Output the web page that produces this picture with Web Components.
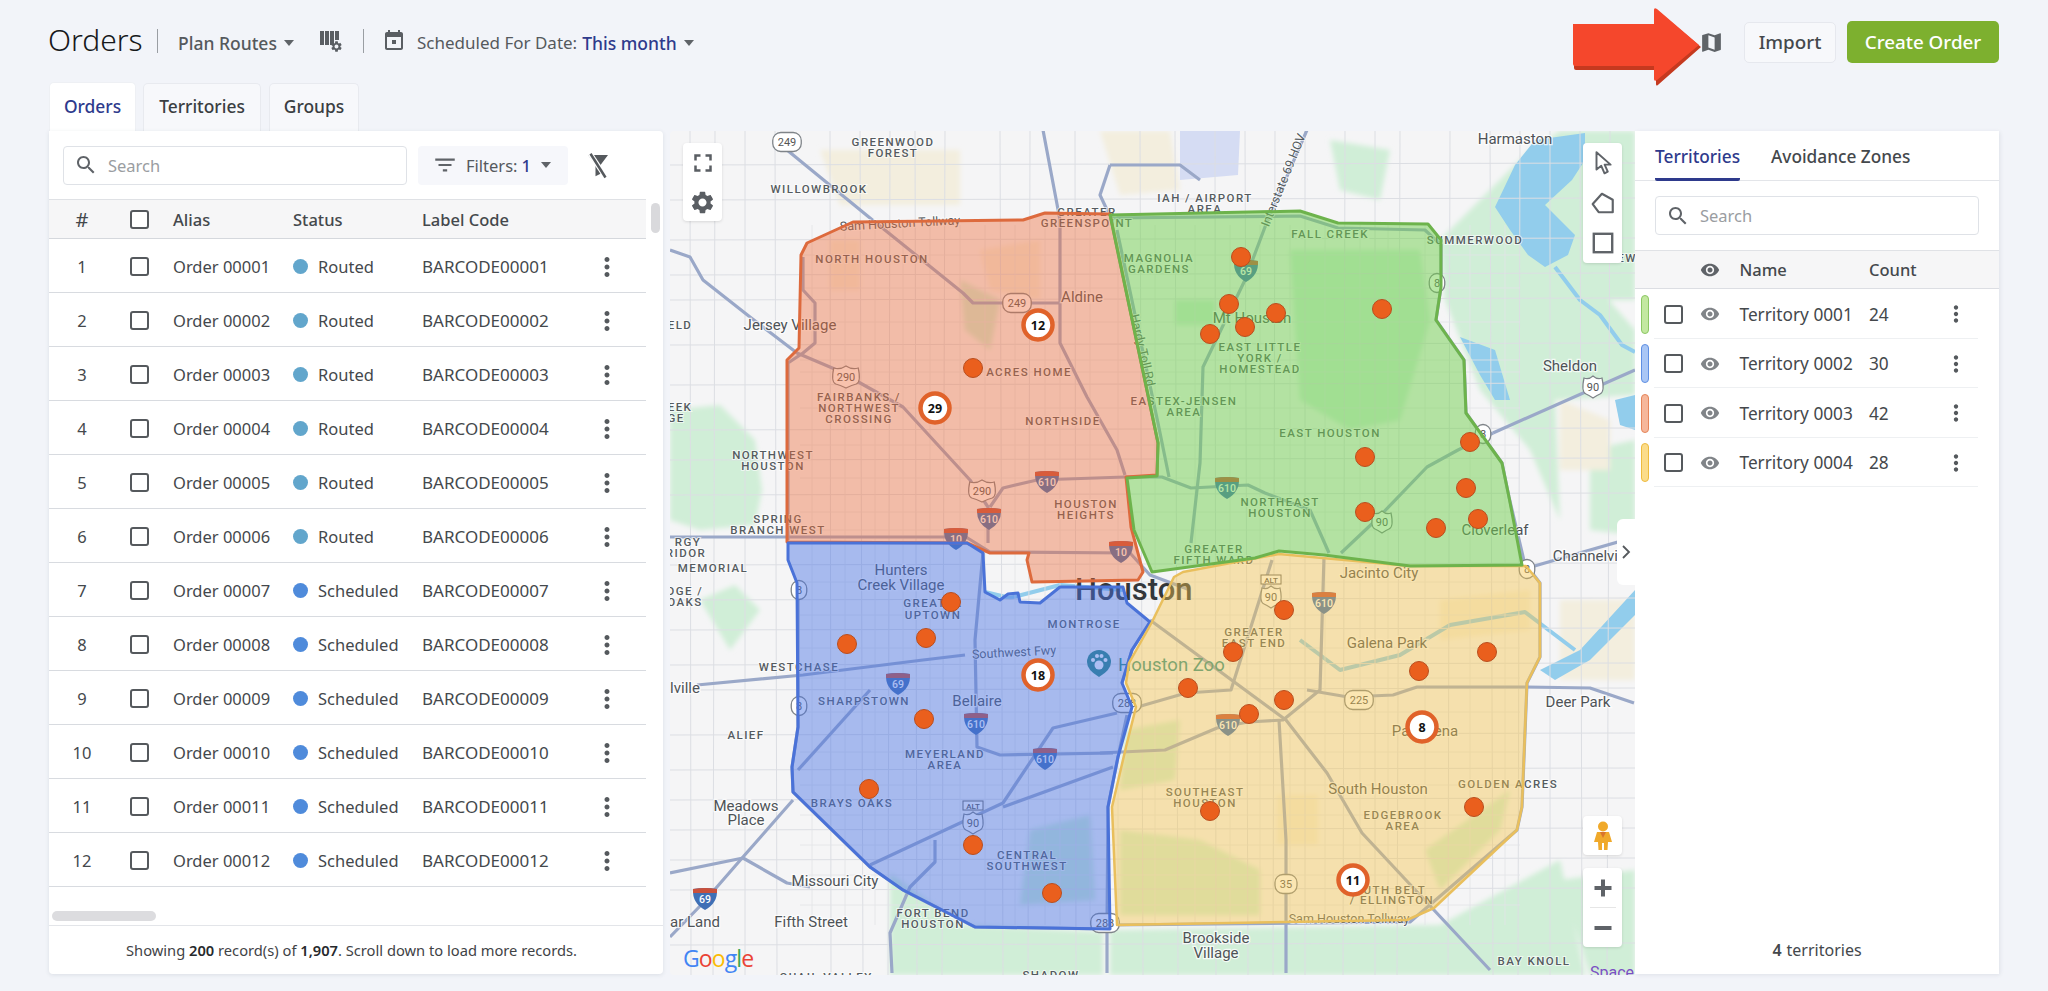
<!DOCTYPE html>
<html lang="en">
<head>
<meta charset="utf-8">
<title>Orders</title>
<style>
  html, body { margin: 0; height: 991px; overflow: hidden; }
  body { background: #f2f4f9; font-family: "Noto Sans", "Open Sans", sans-serif; color: #3f4346; }
</style>
</head>
<body>
<orders-page>
  <top-bar slot="top"></top-bar>
  <tab-strip slot="tabs"></tab-strip>
  <orders-panel slot="left">
    <order-row num="1" alias="Order 00001" status="Routed" code="BARCODE00001"></order-row>
    <order-row num="2" alias="Order 00002" status="Routed" code="BARCODE00002"></order-row>
    <order-row num="3" alias="Order 00003" status="Routed" code="BARCODE00003"></order-row>
    <order-row num="4" alias="Order 00004" status="Routed" code="BARCODE00004"></order-row>
    <order-row num="5" alias="Order 00005" status="Routed" code="BARCODE00005"></order-row>
    <order-row num="6" alias="Order 00006" status="Routed" code="BARCODE00006"></order-row>
    <order-row num="7" alias="Order 00007" status="Scheduled" code="BARCODE00007"></order-row>
    <order-row num="8" alias="Order 00008" status="Scheduled" code="BARCODE00008"></order-row>
    <order-row num="9" alias="Order 00009" status="Scheduled" code="BARCODE00009"></order-row>
    <order-row num="10" alias="Order 00010" status="Scheduled" code="BARCODE00010"></order-row>
    <order-row num="11" alias="Order 00011" status="Scheduled" code="BARCODE00011"></order-row>
    <order-row num="12" alias="Order 00012" status="Scheduled" code="BARCODE00012"></order-row>
  </orders-panel>
  <territory-map slot="map"></territory-map>
  <territory-panel slot="right">
    <territory-row name="Territory 0001" count="24" fill="#c3e8a0" edge="#8cc763"></territory-row>
    <territory-row name="Territory 0002" count="30" fill="#a9c6f5" edge="#5f8fe3"></territory-row>
    <territory-row name="Territory 0003" count="42" fill="#f6b79b" edge="#e5855a"></territory-row>
    <territory-row name="Territory 0004" count="28" fill="#fbdc8a" edge="#eebb3f"></territory-row>
  </territory-panel>
</orders-page>

<script>
// Shared icon paths
const ICONS = {
    search: 'M15.5 14h-.79l-.28-.27C15.41 12.59 16 11.11 16 9.5 16 5.91 13.09 3 9.5 3S3 5.91 3 9.5 5.91 16 9.5 16c1.61 0 3.09-.59 4.23-1.57l.27.28v.79l5 4.99L20.49 19l-4.99-5zm-6 0C7.01 14 5 11.99 5 9.5S7.01 5 9.5 5 14 7.01 14 9.5 11.99 14 9.5 14z',
    filter: 'M10 18h4v-2h-4v2zM3 6v2h18V6H3zm3 7h12v-2H6v2z',
    more: 'M12 8c1.1 0 2-.9 2-2s-.9-2-2-2-2 .9-2 2 .9 2 2 2zm0 2c-1.1 0-2 .9-2 2s.9 2 2 2 2-.9 2-2-.9-2-2-2zm0 6c-1.1 0-2 .9-2 2s.9 2 2 2 2-.9 2-2-.9-2-2-2z',
    eye: 'M12 4.5C7 4.5 2.73 7.61 1 12c1.73 4.39 6 7.5 11 7.5s9.27-3.11 11-7.5c-1.73-4.39-6-7.5-11-7.5zM12 17c-2.76 0-5-2.24-5-5s2.24-5 5-5 5 2.24 5 5-2.24 5-5 5zm0-8c-1.66 0-3 1.34-3 3s1.34 3 3 3 3-1.34 3-3-1.34-3-3-3z',
    gear: 'M19.14 12.94c.04-.3.06-.61.06-.94 0-.32-.02-.64-.07-.94l2.03-1.58c.18-.14.23-.41.12-.61l-1.92-3.32c-.12-.22-.37-.29-.59-.22l-2.39.96c-.5-.38-1.03-.7-1.62-.94l-.36-2.54c-.04-.24-.24-.41-.48-.41h-3.84c-.24 0-.43.17-.47.41l-.36 2.54c-.59.24-1.13.57-1.62.94l-2.39-.96c-.22-.08-.47 0-.59.22L2.74 8.87c-.12.21-.08.47.12.61l2.03 1.58c-.05.3-.09.63-.09.94s.02.64.07.94l-2.03 1.58c-.18.14-.23.41-.12.61l1.92 3.32c.12.22.37.29.59.22l2.39-.96c.5.38 1.03.7 1.62.94l.36 2.54c.05.24.24.41.48.41h3.84c.24 0 .44-.17.47-.41l.36-2.54c.59-.24 1.13-.56 1.62-.94l2.39.96c.22.08.47 0 .59-.22l1.92-3.32c.12-.22.07-.47-.12-.61l-2.01-1.58zM12 15.6c-1.98 0-3.6-1.62-3.6-3.6s1.62-3.6 3.6-3.6 3.6 1.62 3.6 3.6-1.62 3.6-3.6 3.6z',
    calendar: 'M19 3h-1V1h-2v2H8V1H6v2H5c-1.11 0-1.99.9-1.99 2L3 19c0 1.1.89 2 2 2h14c1.1 0 2-.9 2-2V5c0-1.1-.9-2-2-2zm0 16H5V8h14v11zM10 11h4v4h-4z',
    map: 'M20.5 3l-.16.03L15 5.1 9 3 3.36 4.9c-.21.07-.36.25-.36.48V20.5c0 .28.22.5.5.5l.16-.03L9 18.9l6 2.1 5.64-1.9c.21-.07.36-.25.36-.48V3.5c0-.28-.22-.5-.5-.5zM15 19l-6-2.11V5l6 2.11V19z',
    fullscreen: 'M7 14H5v5h5v-2H7v-3zm-2-4h2V7h3V5H5v5zm12 7h-3v2h5v-5h-2v3zM14 5v2h3v3h2V5h-5z'
};
const icon = (name, size, color) => `<svg width="${size}" height="${size}" viewBox="0 0 24 24" fill="${color}" style="display:block;flex:none"><path d="${ICONS[name]}"/></svg>`;
const CARET = '<span style="display:inline-block;width:0;height:0;border-left:5.5px solid transparent;border-right:5.5px solid transparent;border-top:6px solid #5f6368;flex:none"></span>';
const CHECK = '<span style="display:block;box-sizing:border-box;width:19px;height:19px;border:2px solid #55595d;border-radius:3px;background:#fff;flex:none"></span>';

class OrdersPage extends HTMLElement {
    constructor() {
        super();
        this.attachShadow({ mode: 'open' });
        this.shadowRoot.innerHTML = `
            <style>
                :host { display: block; padding: 0 49px 0 48px; }
                .tabs { height: 49px; padding-left: 1px; }
                .main { display: flex; height: 844px; padding-left: 1px; }
                .left { width: 614px; margin-right: 7px; flex: none; }
                .map { width: 965px; flex: none; }
                .right { width: 364px; flex: none; }
            </style>
            <slot name="top"></slot>
            <div class="tabs"><slot name="tabs"></slot></div>
            <div class="main">
                <div class="left"><slot name="left"></slot></div>
                <div class="map"><slot name="map"></slot></div>
                <div class="right"><slot name="right"></slot></div>
            </div>
        `;
    }
}

class TopBar extends HTMLElement {
    constructor() {
        super();
        this.attachShadow({ mode: 'open' });
        this.shadowRoot.innerHTML = `
            <style>
                :host { display: flex; align-items: center; height: 82px; padding-top: 3px; box-sizing: border-box; font-size: 17px; position: relative; color: #55595d; }
                h1 { margin: -6px 0 0; font-size: 30px; font-weight: 300; color: #16181b; width: 92px; white-space: nowrap; }
                .sep { width: 1px; height: 24px; background: #9a9ea3; flex: none; margin-top: -3px; }
                .plan { display: flex; align-items: center; gap: 7px; margin-left: 20px; width: 118px; font-size: 17.5px; font-weight: 500; white-space: nowrap; }
                .cols { position: relative; width: 22px; height: 20px; margin-left: 24px; margin-right: 21px; flex: none; margin-top: -4px; }
                .cols i { position: absolute; top: 0; width: 4px; height: 14px; background: #5a5e63; }
                .cols svg { position: absolute; right: -1px; bottom: -2px; }
                .date { display: flex; align-items: center; margin-left: 18px; white-space: nowrap; }
                .date b { font-size: 17.5px; font-weight: 500; color: #2e3a8c; margin-left: 5px; margin-right: 7px; }
                .date svg { margin-right: 11px; margin-top: -4px; }
                .end { margin-left: auto; display: flex; align-items: center; margin-top: -1px; }
                button { font: 500 18.8px "Noto Sans", sans-serif; height: 41px; border-radius: 5px; box-sizing: border-box; padding: 0; }
                .import { width: 92px; margin-left: 20px; background: #f7f8fb; border: 1px solid #e6e8ee; color: #44484c; }
                .create { width: 152px; height: 42px; margin-left: 11px; background: #7db02f; border: 0; color: #fff; }
                .arrow { position: absolute; left: 1525px; top: 8px; }
            </style>
            <h1>Orders</h1>
            <span class="sep" style="margin-left:17px"></span>
            <div class="plan"><span>Plan Routes</span>${CARET}</div>
            <div class="cols"><i style="left:0"></i><i style="left:5px"></i><i style="left:10px"></i><i style="left:15px;height:9px"></i>
                <svg width="13" height="13" viewBox="0 0 24 24" fill="#5a5e63"><path d="${ICONS.gear}"/></svg></div>
            <span class="sep"></span>
            <div class="date">${icon('calendar', 24, '#5a5e63')}<span>Scheduled For Date:</span><b>This month</b>${CARET}</div>
            <div class="end">${icon('map', 25, '#5f6368')}
                <button class="import">Import</button><button class="create">Create Order</button></div>
            <svg class="arrow" width="130" height="78" viewBox="0 0 130 78">
                <path d="M0 18 H81 V2 Q81 0 84 1 L127 37 L85 74 Q82 77 82 74 V60 H2 Q0 60 0 58 Z" fill="#c5391f" transform="translate(1 2)"/>
                <path d="M0 16 H81 V2 Q81 -1 84 1 L126 37 L84 72 Q81 74 81 71 V58 H2 Q0 58 0 56 Z" fill="#f5472c"/>
            </svg>
        `;
    }
}

class TabStrip extends HTMLElement {
    constructor() {
        super();
        this.attachShadow({ mode: 'open' });
        this.shadowRoot.innerHTML = `
            <style>
                :host { display: flex; gap: 7px; height: 49px; align-items: flex-end; }
                div { box-sizing: border-box; display: flex; align-items: center; justify-content: center; height: 48px; padding-bottom: 3px; background: #f7f8fb; border: 1px solid #e8eaef; border-bottom: 0; border-radius: 5px 5px 0 0; font-size: 17.4px; font-weight: 500; color: #3a3e42; }
                .on { height: 49px; background: #fff; color: #2e3a8c; border-color: #eef0f4; }
            </style>
            <div class="on" style="width:87px">Orders</div>
            <div style="width:118px">Territories</div>
            <div style="width:90px;margin-left:1px">Groups</div>
        `;
    }
}

class SearchBox extends HTMLElement {
    constructor() {
        super();
        this.attachShadow({ mode: 'open' });
        this.shadowRoot.innerHTML = `
            <style>
                :host { display: flex; align-items: center; box-sizing: border-box; height: 39px; gap: 10px; padding-left: 10px; border: 1px solid #dfe2e7; border-radius: 4px; background: #fff; color: #9a9da1; font-size: 16.5px; }
            </style>
            ${icon('search', 24, '#5f6368')}<span>Search</span>
        `;
    }
}

class OrdersPanel extends HTMLElement {
    constructor() {
        super();
        this.attachShadow({ mode: 'open' });
        this.shadowRoot.innerHTML = `
            <style>
                :host { display: flex; flex-direction: column; height: 843px; background: #fff; border-radius: 0 4px 4px 4px; box-shadow: 0 1px 4px rgba(60,70,90,.12); font-size: 16.5px; position: relative; color: #44484c; }
                .tools { display: flex; align-items: center; height: 68px; padding: 0 14px; flex: none; }
                search-box { width: 344px; }
                .filters { display: flex; align-items: center; width: 150px; height: 39px; margin-left: 11px; box-sizing: border-box; padding-left: 14px; gap: 8px; background: #f6f7fb; border-radius: 4px; color: #55595d; }
                .filters b { font-weight: 500; color: #2e3a8c; margin-left: -4px; margin-right: 2px; }
                .clear { margin-left: 15px; }
                .head, ::slotted(order-row) { width: 597px; }
                .head { display: grid; grid-template-columns: 66px 58px 120px 129px 170px; align-items: center; box-sizing: border-box; height: 40px; background: #f6f6f7; border-top: 1px solid #dfe1e5; border-bottom: 1px solid #d5d8dd; font-weight: 500; flex: none; white-space: nowrap; }
                .head .n { text-align: center; font-size: 20px; font-weight: 400; }
                .head .c { padding-left: 15px; }
                .rows { height: 686px; flex: none; }
                .vbar { position: absolute; left: 602px; top: 72px; width: 9px; height: 30px; background: #d9d9dc; border-radius: 5px; }
                .hbar { position: absolute; left: 3px; top: 780px; width: 104px; height: 10px; background: #dcdcdf; border-radius: 5px; }
                .foot { display: flex; align-items: center; justify-content: center; flex: 1; padding-right: 9px; border-top: 1px solid #e3e5e9; font-size: 14.7px; color: #3f4346; }
                .foot b { font-weight: 600; color: #26292c; }
                .foot span { white-space: pre; }
            </style>
            <div class="tools">
                <search-box></search-box>
                <div class="filters">${icon('filter', 26, '#5f6368')}<span>Filters:</span><b>1</b>${CARET}</div>
                <svg class="clear" width="30" height="30" viewBox="0 0 24 24"><path d="M4 4 H20 L14 12 V19 L10 21 V12 Z" fill="#55595d"/><path d="M5 2 L19 23" stroke="#fff" stroke-width="4"/><path d="M6 3 L18 22" stroke="#55595d" stroke-width="2"/></svg>
            </div>
            <div class="head"><span class="n">#</span><span class="c">${CHECK}</span><span>Alias</span><span>Status</span><span>Label Code</span></div>
            <div class="rows"><slot></slot></div>
            <div class="foot"><span>Showing <b>200</b> record(s) of <b>1,907</b>. Scroll down to load more records.</span></div>
            <div class="vbar"></div>
            <div class="hbar"></div>
        `;
    }
}

class OrderRow extends HTMLElement {
    connectedCallback() {
        const root = this.attachShadow({ mode: 'open' });
        const dot = this.getAttribute('status') === 'Routed' ? '#62a6cc' : '#4f8bdb';
        root.innerHTML = `
            <style>
                :host { display: grid; grid-template-columns: 66px 58px 120px 129px 170px 30px; align-items: center; box-sizing: border-box; height: 54px; padding-top: 2px; border-bottom: 1px solid #d8dbe0; white-space: nowrap; }
                .n { text-align: center; }
                .c { padding-left: 15px; }
                .s { display: flex; align-items: center; gap: 10px; }
                .s i { width: 15px; height: 15px; border-radius: 50%; flex: none; }
                .code { font-size: 17px; }
            </style>
            <span class="n">${this.getAttribute('num')}</span>
            <span class="c">${CHECK}</span>
            <span>${this.getAttribute('alias')}</span>
            <span class="s"><i style="background:${dot}"></i>${this.getAttribute('status')}</span>
            <span class="code">${this.getAttribute('code')}</span>
            ${icon('more', 30, '#55595d')}
        `;
    }
}

class TerritoryPanel extends HTMLElement {
    constructor() {
        super();
        this.attachShadow({ mode: 'open' });
        this.shadowRoot.innerHTML = `
            <style>
                :host { display: flex; flex-direction: column; height: 843px; background: #fff; box-shadow: 1px 1px 4px rgba(60,70,90,.1); font-size: 17.25px; color: #44484c; }
                .tabs { display: flex; gap: 31px; height: 50px; padding-left: 20px; box-sizing: border-box; border-bottom: 1px solid #e3e5e9; font-weight: 500; flex: none; }
                .tabs span { display: flex; align-items: center; height: 50px; box-sizing: border-box; padding-top: 1px; }
                .tabs .on { color: #2e3a8c; border-bottom: 3px solid #2e3a8c; padding-top: 3px; border-radius: 0 0 2px 2px; }
                search-box { margin: 15px 20px 15px; height: 39px; }
                .head { display: grid; grid-template-columns: 65px 20px 19.5px 129.5px auto; align-items: center; height: 39px; box-sizing: border-box; background: #f6f6f7; border-top: 1px solid #e0e2e6; border-bottom: 1px solid #dcdee3; font-size: 16.5px; font-weight: 500; flex: none; white-space: nowrap; }
                .rows { flex: 1; }
                .foot { display: flex; align-items: center; justify-content: center; gap: 5px; font-size: 16px; height: 48px; flex: none; }
                .foot b { font-weight: 600; }
            </style>
            <div class="tabs"><span class="on">Territories</span><span>Avoidance Zones</span></div>
            <search-box></search-box>
            <div class="head"><span></span><span>${icon('eye', 20, '#5f6368')}</span><span></span><span>Name</span><span>Count</span></div>
            <div class="rows"><slot></slot></div>
            <div class="foot"><b>4</b><span>territories</span></div>
        `;
    }
}

class TerritoryRow extends HTMLElement {
    connectedCallback() {
        const root = this.attachShadow({ mode: 'open' });
        root.innerHTML = `
            <style>
                :host { display: grid; grid-template-columns: 6px 8px 15px 20px 16px 20px 19.5px 129.5px 74px 26px; align-items: center; height: 49.5px; box-sizing: border-box; padding-top: 1px; white-space: nowrap; position: relative; }
                .bar { grid-column: 2; box-sizing: border-box; height: 39px; border: 1.5px solid ${this.getAttribute('edge')}; background: ${this.getAttribute('fill')}; border-radius: 4px; }
                .ck { grid-column: 4; }
                .eye { grid-column: 6; }
                .name { grid-column: 8; }
                .count { grid-column: 9; }
                .line { position: absolute; left: 19px; right: 21px; bottom: 0; height: 1px; background: #eef0f2; }
            </style>
            <span class="bar"></span>
            <span class="ck">${CHECK}</span>
            <span class="eye">${icon('eye', 20, '#808488')}</span>
            <span class="name">${this.getAttribute('name')}</span>
            <span class="count">${this.getAttribute('count')}</span>
            ${icon('more', 26, '#55595d')}
            <span class="line"></span>
        `;
    }
}

// Map drawing data, all in page pixels (viewBox is offset to the map's corner)
const path = pts => 'M' + pts.map(p => p.join(' ')).join(' L');
const ZONES = {
    orange: [[787,542],[787,360],[799,348],[801,255],[807,243],[853,222],[1023,220],[1045,213],[1110,214],[1158,443],[1157,475],[1126,477],[1131,527],[1143,572],[1138,580],[1032,582],[1027,560],[1029,553],[990,553],[967,543]],
    blue: [[788,543],[788,560],[797,583],[798,727],[792,767],[793,792],[870,867],[903,890],[975,927],[1110,929],[1108,807],[1118,757],[1132,707],[1122,683],[1132,650],[1150,622],[1127,603],[1123,587],[1060,587],[1040,603],[1020,602],[1018,593],[1008,594],[1000,600],[985,592],[983,553],[967,543]],
    green: [[1110,215],[1300,211],[1338,223],[1428,224],[1441,240],[1441,287],[1436,320],[1464,360],[1466,413],[1502,463],[1509,497],[1522,565],[1410,566],[1324,555],[1279,551],[1255,558],[1152,572],[1134,530],[1127,478],[1157,476],[1158,443]],
    yellow: [[1183,572],[1279,554],[1410,566],[1526,566],[1540,583],[1540,657],[1527,683],[1522,807],[1517,830],[1434,908],[1407,920],[1117,925],[1112,807],[1126,747],[1136,707],[1126,683],[1129,663],[1152,622],[1174,577]]
};
const PARKS = [
    [[670,410],[720,405],[755,440],[762,490],[755,525],[700,530],[670,520]],
    [[1445,300],[1600,290],[1635,330],[1635,395],[1555,400],[1560,520],[1530,450],[1480,390]],
    [[1440,240],[1530,150],[1560,131],[1635,131],[1635,300],[1445,300]],
    [[1590,450],[1635,440],[1635,535],[1590,530]],
    [[890,873],[960,925],[1103,932],[1103,975],[890,975]],
    [[1110,930],[1440,925],[1560,860],[1585,975],[1110,975]],
    [[1030,830],[1090,815],[1095,900],[1020,905]],
    [[1290,250],[1420,250],[1430,320],[1400,420],[1350,430],[1300,400]],
    [[1120,830],[1200,840],[1260,870],[1260,915],[1120,915]],
    [[1125,730],[1180,720],[1175,780],[1120,790]],
    [[1425,850],[1510,790],[1500,830],[1440,890]],
    [[700,600],[735,585],[760,610],[730,650]],
    [[1175,300],[1215,300],[1215,325],[1175,325]],
    [[1330,140],[1390,150],[1380,200],[1340,190]],
    [[960,280],[1000,300],[990,350],[965,330]],
    [[1560,880],[1635,870],[1635,975],[1590,975]]
];
const TAN = [
    [[1100,131],[1170,131],[1180,190],[1120,195]],
    [[1277,795],[1318,795],[1318,845],[1277,845]],
    [[1560,600],[1635,600],[1635,680],[1560,680]],
    [[980,250],[1040,240],[1040,300],[990,290]],
    [[1560,400],[1610,420],[1610,470],[1560,470]],
    [[820,150],[960,150],[960,205],[840,205]],
    [[830,240],[860,240],[860,290],[830,290]],
    [[1440,600],[1530,590],[1530,630],[1440,640]]
];
const WATER = [
    [[1495,207],[1515,165],[1535,140],[1585,133],[1585,160],[1572,180],[1545,205],[1575,235],[1568,255],[1545,267],[1528,255],[1510,230]],
    [[1460,337],[1495,350],[1510,400],[1495,400],[1480,375]],
    [[1540,670],[1580,650],[1635,590],[1635,615],[1590,660],[1555,680]],
    [[1615,400],[1635,395],[1635,430],[1620,425]],
    [[1180,131],[1240,131],[1238,175],[1180,180]]
];
const RIVERS = [
    [[1555,267],[1580,300],[1600,315],[1622,345],[1635,352]],
    [[1300,640],[1340,670],[1400,655],[1450,625],[1525,612],[1575,650]],
    [[985,592],[1010,598],[1060,585],[1123,590]]
];
const ROADS = [
    [[787,150],[870,218],[963,293],[973,303],[1060,303]],
    [[1043,130],[1060,220],[1060,343],[1087,397],[1117,450],[1125,475]],
    [[803,257],[803,290],[815,303],[815,343],[803,353],[788,363],[788,540]],
    [[670,250],[690,257],[703,280],[750,317],[797,353],[837,370],[903,407],[970,480],[988,507],[988,543]],
    [[670,537],[966,537],[990,552],[1130,553],[1150,575],[1190,590]],
    [[990,507],[1003,488],[1037,480],[1125,477],[1162,477],[1191,488],[1248,485],[1265,493],[1310,510],[1329,553]],
    [[1307,130],[1265,227],[1245,280],[1203,367],[1200,463],[1191,543]],
    [[1117,230],[1158,423],[1169,477]],
    [[1110,218],[1300,216],[1338,228],[1425,230],[1441,245],[1441,287],[1436,320],[1464,360],[1466,413],[1502,463],[1509,497],[1525,565]],
    [[1635,370],[1493,433]],
    [[1493,433],[1458,450],[1427,467],[1376,520],[1341,553]],
    [[1531,567],[1635,537]],
    [[1150,620],[1286,720],[1327,773],[1362,833],[1490,970]],
    [[1279,720],[1286,840],[1286,973]],
    [[1307,690],[1348,697],[1393,695],[1417,687],[1527,687],[1590,688],[1634,703]],
    [[1324,557],[1320,690],[1283,720],[1248,722],[1217,728],[1165,750],[1100,753]],
    [[1272,560],[1231,690],[1186,693],[1134,708]],
    [[1110,925],[1410,922],[1517,830],[1522,807],[1527,683],[1540,657],[1540,583],[1530,570]],
    [[965,655],[923,660],[803,675],[697,685]],
    [[983,553],[975,640],[977,747],[1000,755],[1113,753]],
    [[1117,713],[1053,728],[1003,803],[870,865]],
    [[1113,767],[1003,807]],
    [[793,800],[743,857],[703,903],[670,937]],
    [[670,873],[743,858],[787,883],[810,887]],
    [[935,840],[935,862],[910,887],[890,933],[892,973]],
    [[1107,930],[1107,973]],
    [[798,583],[798,727],[792,767],[793,792],[870,867],[903,890],[975,927],[1107,929],[1108,807],[1118,757],[1127,715]],
    [[1110,165],[1100,195],[1108,212]],
    [[1110,165],[1180,165],[1200,180]],
    [[870,690],[798,770]],
    [[1150,622],[1132,650],[1122,683]]
];
const LABELS = [
    ['GREENWOOD',893,142],['FOREST',893,153],['WILLOWBROOK',819,189],['NORTH HOUSTON',872,259],['Sam Houston Tollway',900,223,'r',-3],
    ['Jersey Village',790,325,'t'],['Aldine',1082,297,'t'],['ACRES HOME',1029,372],['FAIRBANKS /',859,397],['NORTHWEST',859,408],['CROSSING',859,419],
    ['NORTHSIDE',1063,421],['NORTHWEST',773,455],['HOUSTON',773,466],['HOUSTON',1086,504],['HEIGHTS',1086,515],['SPRING',778,519],['BRANCH WEST',778,530],
    ['ELD',680,325],['EEK',680,407],['GE',676,418],['RGY',688,542],['RIDOR',686,553],['GREATER',1087,212],['GREENSPOINT',1087,223],
    ['IAH / AIRPORT',1205,198],['AREA',1205,209],['Harmaston',1515,139,'t'],['Interstate 69 HOV',1283,180,'r',-68],['FALL CREEK',1330,234],['SUMMERWOOD',1475,240],
    ['MAGNOLIA',1159,258],['GARDENS',1159,269],['Mt Houston',1252,318,'t'],['EAST LITTLE',1260,347],['YORK /',1260,358],['HOMESTEAD',1260,369],['Hardy Toll Rd',1143,350,'r',77],
    ['EASTEX-JENSEN',1184,401],['AREA',1184,412],['EAST HOUSTON',1330,433],['NORTHEAST',1280,502],['HOUSTON',1280,513],['GREATER',1214,549],['FIFTH WARD',1214,560],
    ['Sheldon',1570,366,'t'],['Cloverleaf',1495,530,'t'],['Channelview',1595,556,'t'],['Jacinto City',1379,573,'t'],['EW',1627,258],
    ['MEMORIAL',713,568],['DGE /',685,591],['OAKS',685,602],['Hunters',901,570,'t'],['Creek Village',901,585,'t'],['GREATER',933,603],['UPTOWN',933,615],['MONTROSE',1084,624],
    ['Southwest Fwy',1014,652,'r',-3],['WESTCHASE',799,667],['lville',685,688,'t'],['SHARPSTOWN',864,701],['Bellaire',977,701,'t'],['ALIEF',746,735],['MEYERLAND',945,754],['AREA',945,765],
    ['Meadows',746,806,'t'],['Place',746,820,'t'],['BRAYS OAKS',852,803],['CENTRAL',1027,855],['SOUTHWEST',1027,866],['Missouri City',835,881,'t'],['FORT BEND',933,913],['HOUSTON',933,924],
    ['Fifth Street',811,922,'t'],['ar Land',695,922,'t'],['QUAIL VALLEY',826,977],['SHADOW',1051,975],
    ['GREATER',1254,632],['EAST END',1254,643],['Galena Park',1387,643,'t'],['Pasadena',1425,731,'t'],['Deer Park',1578,702,'t'],['SOUTHEAST',1205,792],['HOUSTON',1205,803],
    ['South Houston',1378,789,'t'],['GOLDEN ACRES',1508,784],['EDGEBROOK',1403,815],['AREA',1403,826],['SOUTH BELT',1386,890],['/ ELLINGTON',1392,900],['Sam Houston Tollway',1349,918,'r',0],
    ['Brookside',1216,938,'t'],['Village',1216,953,'t'],['BAY KNOLL',1534,961]
];
const SHIELDS = [
    ['s',787,142,'249'],['s',1017,303,'249'],['u',846,377,'290'],['u',982,491,'290'],['i',1047,481,'610'],['i',989,518,'610'],['i',956,538,'10'],['i',1121,551,'10'],
    ['i',1246,270,'69'],['s',1437,283,'8'],['s',1483,434,'8'],['u',1593,387,'90'],['i',1227,487,'610'],['u',1382,522,'90'],['s',1527,569,'8'],
    ['s',799,590,'8'],['s',799,706,'8'],['i',898,683,'69'],['i',976,723,'610'],['i',1045,758,'610'],['a',973,823,'90'],['s',1127,703,'288'],['s',1105,923,'288'],
    ['i',705,898,'69'],['a',1271,597,'90'],['i',1324,602,'610'],['s',1359,700,'225'],['i',1228,724,'610'],['s',1286,884,'35']
];
const DOTS = [[1241,257],[1229,304],[1276,313],[1245,327],[1210,334],[1382,309],[1365,457],[1470,442],[1466,488],[1365,512],[1478,519],[1436,528],
    [973,368],[951,602],[926,638],[847,644],[924,719],[869,789],[973,845],[1052,893],
    [1284,610],[1233,652],[1188,688],[1284,700],[1249,714],[1419,671],[1487,652],[1474,807],[1210,811]];
const CLUSTERS = [[1038,325,'12'],[935,408,'29'],[1038,675,'18'],[1422,727,'8'],[1353,880,'11']];
const XS = [690,715,745,775,830,860,890,915,945,1000,1030,1075,1140,1175,1215,1245,1275,1305,1345,1375,1400,1450,1490,1520,1550,1580,1610];
const YS = [165,200,240,275,300,345,385,430,460,495,565,600,630,665,690,735,770,800,830,860,890,945];
// Denser street grid inside the city
const XS2 = [812,845,875,903,930,960,985,1015,1045,1060,1090,1118,1155,1195,1230,1260,1290,1325,1360,1388,1425,1470,1505];
const YS2 = [255,288,322,360,372,408,445,478,512,530,582,615,648,678,712,752,785,815,845,875,905];

class TerritoryMap extends HTMLElement {
    constructor() {
        super();
        this.attachShadow({ mode: 'open' });
    }

    connectedCallback() {
        this.render();
    }

    shield([kind, x, y, label]) {
        if (kind === 'i') {
            return `<path d="M${x-12} ${y-9} Q${x} ${y-11} ${x+12} ${y-9} Q${x+13} ${y+5} ${x} ${y+12} Q${x-13} ${y+5} ${x-12} ${y-9}Z" fill="#3f6fb5"/><path d="M${x-12} ${y-9} Q${x} ${y-11} ${x+12} ${y-9} L${x+12} ${y-5} L${x-12} ${y-5}Z" fill="#c9503c"/><text x="${x}" y="${y+5}" text-anchor="middle" font-size="10.5" font-weight="500" fill="#fff">${label}</text>`;
        }
        if (kind === 'u' || kind === 'a') {
            const w = 5 + label.length * 6.5;
            const alt = kind === 'a' ? `<rect x="${x-10}" y="${y-22}" width="20" height="9" fill="#fff" stroke="#666"/><text x="${x}" y="${y-14.5}" text-anchor="middle" font-size="8" font-weight="500" fill="#555">ALT</text>` : '';
            return `${alt}<path d="M${x-w/2} ${y-9} Q${x-w/4} ${y-7} ${x} ${y-11} Q${x+w/4} ${y-7} ${x+w/2} ${y-9} Q${x+w/2+3} ${y+5} ${x+w/2-2} ${y+7} Q${x+w/4} ${y+8} ${x} ${y+11} Q${x-w/4} ${y+8} ${x-w/2+2} ${y+7} Q${x-w/2-3} ${y+5} ${x-w/2} ${y-9}Z" fill="#fff" stroke="#7d8288" stroke-width="1.2"/><text x="${x}" y="${y+4}" text-anchor="middle" font-size="11" fill="#555">${label}</text>`;
        }
        const w = 9 + label.length * 6.5;
        return `<rect x="${x-w/2}" y="${y-9.5}" width="${w}" height="19" rx="8" fill="#fff" stroke="#7f8489" stroke-width="1.3"/><text x="${x}" y="${y+4}" text-anchor="middle" font-size="11" fill="#555">${label}</text>`;
    }

    label([text, x, y, kind, rot]) {
        const turn = rot ? ` transform="rotate(${rot} ${x} ${y})"` : '';
        const cls = kind || 'n';
        return `<text class="${cls}" x="${x}" y="${y}" text-anchor="middle" dominant-baseline="central"${turn}>${text}</text>`;
    }

    render() {
        const poly = pts => pts.map(p => p.join(',')).join(' ');
        this.shadowRoot.innerHTML = `
            <style>
                :host { display: block; position: relative; width: 965px; height: 844px; overflow: hidden; background: #f5f5f6; border-radius: 4px 0 0 4px; font-family: Roboto, sans-serif; }
                svg.base { position: absolute; left: 0; top: 0; font-family: Roboto, sans-serif; }
                .n { font-size: 11.5px; font-weight: 500; letter-spacing: 1.45px; fill: #555b60; paint-order: stroke; stroke: rgba(255,255,255,.65); stroke-width: 2px; }
                .t { font-size: 15px; fill: #4e5357; paint-order: stroke; stroke: rgba(255,255,255,.75); stroke-width: 2.5px; }
                .r { font-size: 12.5px; fill: #555b60; paint-order: stroke; stroke: rgba(255,255,255,.7); stroke-width: 2px; }
                .big { font-size: 31px; font-weight: 500; fill: #33373b; }
                .zoo { font-size: 18.5px; fill: #2c8f8c; }
                .space { font-size: 16px; fill: #7b4fc4; }
                .c { font-size: 12.5px; font-weight: 700; fill: #111; font-family: "Noto Sans", sans-serif; }
                .ctl { position: absolute; background: #fff; border-radius: 4px; box-shadow: 0 1px 3px rgba(0,0,0,.12); display: flex; flex-direction: column; align-items: center; }
                .google { position: absolute; left: 13px; bottom: 2px; font: 500 23px "Open Sans", Roboto, sans-serif; letter-spacing: -.9px; line-height: 30px; }
                .pan { position: absolute; left: 947px; top: 388px; width: 18px; height: 66px; background: #fff; border-radius: 6px 0 0 6px; display: flex; align-items: center; justify-content: center; }
            </style>
            <svg class="base" width="965" height="844" viewBox="670 131 965 844">
                <defs><filter id="soft" x="-10%" y="-10%" width="120%" height="120%"><feGaussianBlur stdDeviation="2.5"/></filter></defs>
                <g filter="url(#soft)">
                    ${PARKS.map(p => `<polygon points="${poly(p)}" fill="#d0eed7"/>`).join('')}
                    ${TAN.map(p => `<polygon points="${poly(p)}" fill="#f3eede"/>`).join('')}
                </g>
                ${WATER.slice(0, 4).map(p => `<polygon points="${poly(p)}" fill="#92cdec"/>`).join('')}
                <polygon points="${poly(WATER[4])}" fill="#d5dcf3"/>
                ${RIVERS.map(r => `<path d="${path(r)}" fill="none" stroke="#92cdec" stroke-width="4" stroke-linejoin="round"/>`).join('')}
                ${XS.map(x => `<line x1="${x}" y1="131" x2="${x + (x % 7) - 3}" y2="975" stroke="#dcdee3"/>`).join('')}
                ${YS.map(y => `<line x1="670" y1="${y}" x2="1635" y2="${y + (y % 5) - 2}" stroke="#dcdee3"/>`).join('')}
                ${XS2.map(x => `<line x1="${x}" y1="225" x2="${x}" y2="925" stroke="#e2e3e7" stroke-width=".8"/>`).join('')}
                ${YS2.map(y => `<line x1="800" y1="${y}" x2="1520" y2="${y}" stroke="#e2e3e7" stroke-width=".8"/>`).join('')}
                ${ROADS.map(r => `<path d="${path(r)}" fill="none" stroke="#9aa8c8" stroke-width="3.2" stroke-linejoin="round"/>`).join('')}
                ${SHIELDS.map(s => this.shield(s)).join('')}
                ${LABELS.map(l => this.label(l)).join('')}
                <text class="big" x="1075" y="600">Houston</text>
                <text class="zoo" x="1118" y="671">Houston Zoo</text>
                <g transform="translate(1099 662)">
                    <path d="M-12 0 A12 12 0 1 1 12 0 Q12 8 0 15 Q-12 8 -12 0Z" fill="#2a8784"/>
                    <circle cx="0" cy="3" r="4.5" fill="#fff"/><circle cx="-6" cy="-2" r="2" fill="#fff"/><circle cx="-2" cy="-6" r="2" fill="#fff"/><circle cx="2.5" cy="-6" r="2" fill="#fff"/><circle cx="6.5" cy="-2" r="2" fill="#fff"/>
                </g>
                <polygon points="${poly(ZONES.orange)}" fill="#ef6d3c" fill-opacity=".42" stroke="#dd6a3d" stroke-width="3" stroke-linejoin="round"/>
                <polygon points="${poly(ZONES.blue)}" fill="#4a74e4" fill-opacity=".46" stroke="#4a72d8" stroke-width="3" stroke-linejoin="round"/>
                <polygon points="${poly(ZONES.yellow)}" fill="#f5c347" fill-opacity=".42" stroke="#e9bf5c" stroke-width="2.5" stroke-linejoin="round"/>
                <polygon points="${poly(ZONES.green)}" fill="#72cf4e" fill-opacity=".5" stroke="#6db34c" stroke-width="3" stroke-linejoin="round"/>
                ${DOTS.map(([x, y]) => `<circle cx="${x}" cy="${y}" r="9.5" fill="#ea5f1d" stroke="#b94e1f" stroke-width="1"/>`).join('')}
                ${CLUSTERS.map(([x, y, n]) => `<circle cx="${x}" cy="${y}" r="14.5" fill="#fff" stroke="#e0622a" stroke-width="4.5"/><text class="c" x="${x}" y="${y}" text-anchor="middle" dominant-baseline="central">${n}</text>`).join('')}
                <text class="space" x="1590" y="978">Space</text>
            </svg>
            <div class="ctl" style="left:13px;top:12px;width:39px;height:78px;justify-content:space-around;padding:0">
                ${icon('fullscreen', 30, '#5a5e63')}${icon('gear', 27, '#5a5e63')}
            </div>
            <div class="ctl" style="left:913px;top:12px;width:39px;height:120px;justify-content:space-around">
                <svg width="26" height="26" viewBox="0 0 24 24" fill="#fff" stroke="#5f6368" stroke-width="1.8" stroke-linejoin="round"><path d="M6 2 V18 L10.4 14.6 L13.4 21.5 L16.4 20 L13.5 13.5 H19 Z"/></svg>
                <svg width="26" height="26" viewBox="0 0 24 24" fill="none" stroke="#5f6368" stroke-width="2" stroke-linejoin="round"><path d="M2.5 13 L11 3.5 L21 9 V20.5 H8 Z"/></svg>
                <svg width="26" height="26" viewBox="0 0 24 24" fill="none" stroke="#5f6368" stroke-width="2.2"><rect x="3.5" y="3.5" width="17" height="17"/></svg>
            </div>
            <div class="pan"><svg width="10" height="16" viewBox="0 0 10 16" fill="none" stroke="#55595d" stroke-width="1.8"><path d="M2 2 L8 8 L2 14"/></svg></div>
            <div class="ctl" style="left:913px;top:685px;width:39px;height:39px;justify-content:center">
                <svg width="20" height="30" viewBox="0 0 20 30"><circle cx="10" cy="5.5" r="5" fill="#f0a92a"/><path d="M4 11 H16 L19 21 L15 21 L14.5 29 H11 V22 H9 V29 H5.5 L5 21 L1 21 Z" fill="#f0a92a"/><path d="M7 11 L10 17 L13 11Z" fill="#d9742a"/></svg>
            </div>
            <div class="ctl" style="left:913px;top:737px;width:39px;height:79px">
                <svg width="22" height="39" viewBox="0 0 22 39" fill="#5f6368"><rect x="2.5" y="18" width="17" height="4"/><rect x="9" y="11.5" width="4" height="17"/></svg>
                <span style="display:block;width:26px;height:1px;background:#e6e6e6"></span>
                <svg width="22" height="39" viewBox="0 0 22 39" fill="#5f6368"><rect x="2.5" y="18" width="17" height="4"/></svg>
            </div>
            <div class="google"><span style="color:#4285f4">G</span><span style="color:#ea4335">o</span><span style="color:#fbbc05">o</span><span style="color:#4285f4">g</span><span style="color:#34a853">l</span><span style="color:#ea4335">e</span></div>
        `;
    }
}

// Register Components
customElements.define('orders-page', OrdersPage);
customElements.define('top-bar', TopBar);
customElements.define('tab-strip', TabStrip);
customElements.define('search-box', SearchBox);
customElements.define('orders-panel', OrdersPanel);
customElements.define('order-row', OrderRow);
customElements.define('territory-panel', TerritoryPanel);
customElements.define('territory-row', TerritoryRow);
customElements.define('territory-map', TerritoryMap);
</script>
</body>
</html>
